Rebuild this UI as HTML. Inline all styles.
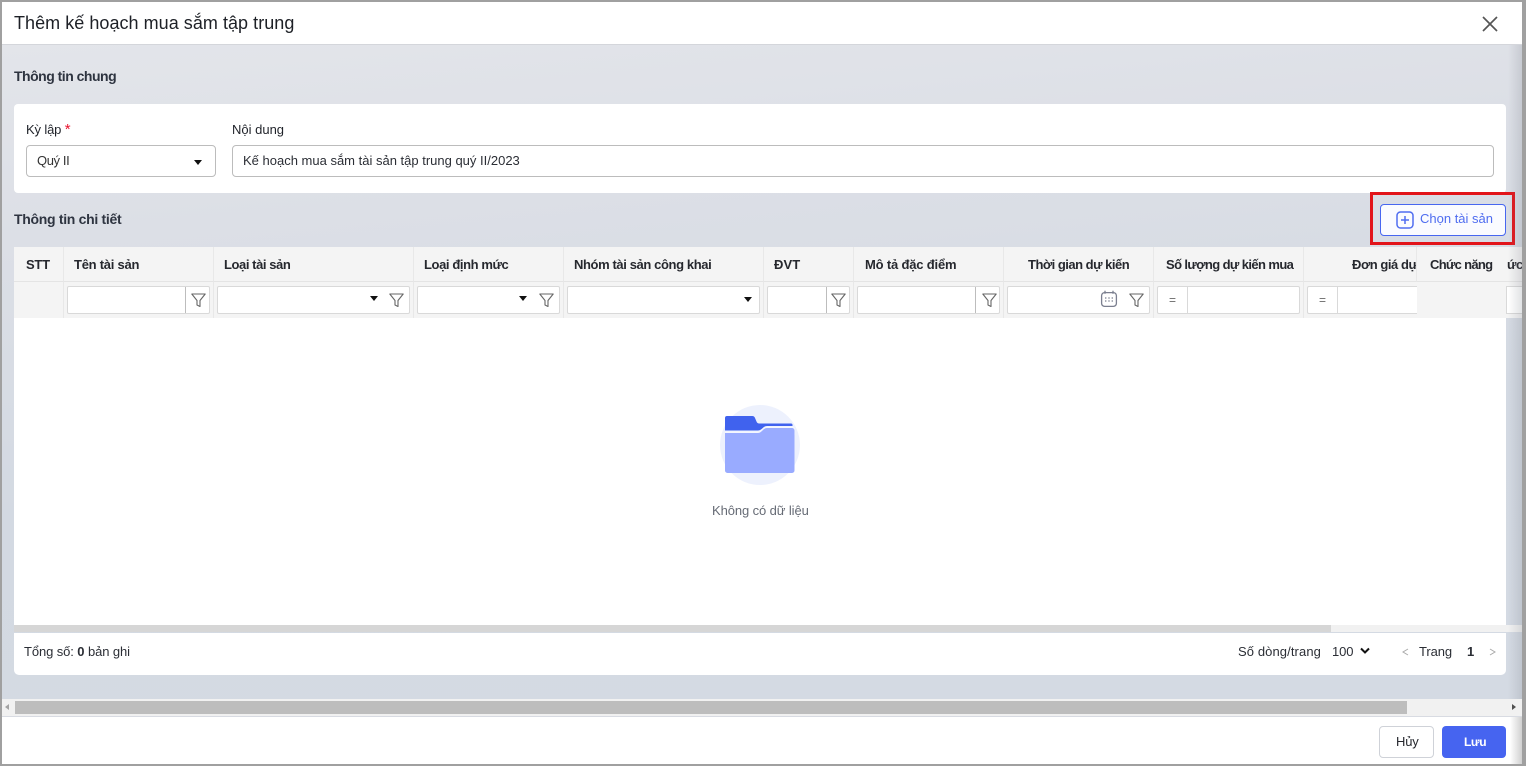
<!DOCTYPE html>
<html lang="vi"><head><meta charset="utf-8"><title>Thêm kế hoạch mua sắm tập trung</title>
<style>
*{box-sizing:border-box}
html,body{margin:0;padding:0;width:1526px;height:766px;overflow:hidden;background:#fff}
body{font-family:"Liberation Sans",sans-serif;color:#1f2229;font-size:13px;position:relative}
.a{position:absolute}
.t{position:absolute;white-space:nowrap;line-height:16px}
.b{font-weight:bold}
.bg{left:2px;top:45px;width:1520px;height:654px;background:linear-gradient(175deg,#e3e5ea 0%,#dcdfe6 25%,#d3d9e2 60%,#d4dae3 100%)}
.card{background:#fff}
.th{top:247px;height:35px;background:#f4f4f4;border-right:1px solid #e8e8e8;border-bottom:1px solid #e4e4e4}
.fr{top:282px;height:36px;background:#f4f4f4;border-right:1px solid #e8e8e8}
.in{top:286px;height:28px;background:#fff;border:1px solid #d9d9d9;border-radius:2px}
.sep{top:287px;width:1px;height:26px;background:#bdbdbd}
.sep2{top:287px;width:1px;height:26px;background:#d9d9d9}
.h{font-weight:bold;top:257px;font-size:13px;color:#26282e;letter-spacing:-.25px}
.car{width:0;height:0;border-left:4.5px solid transparent;border-right:4.5px solid transparent;border-top:5px solid #111}
svg{position:absolute;display:block}
</style></head><body>
<div class="a bg"></div>

<!-- header -->
<div class="a" style="left:2px;top:2px;width:1520px;height:43px;background:#fff;border-bottom:1px solid #d4d6db"></div>
<div class="t" style="left:14px;top:12px;font-size:18px;line-height:22px;color:#1d2026;letter-spacing:.04px">Thêm kế hoạch mua sắm tập trung</div>
<svg style="left:1481px;top:15px" width="18" height="18" viewBox="0 0 18 18"><path d="M2 2 16 16M16 2 2 16" stroke="#555" stroke-width="1.7" fill="none"/></svg>

<!-- general -->
<div class="t b" style="left:14px;top:68px;font-size:14px;color:#2e3440;letter-spacing:-.5px">Thông tin chung</div>
<div class="a card" style="left:14px;top:104px;width:1492px;height:89px;border-radius:4px"></div>
<div class="t" style="left:26px;top:122px;letter-spacing:-.15px">Kỳ lập <span style="color:#e8112d;font-size:15px">*</span></div>
<div class="t" style="left:232px;top:122px">Nội dung</div>
<div class="a" style="left:26px;top:145px;width:190px;height:32px;border:1px solid #bcbcbc;border-radius:4px;background:#fff"></div>
<div class="t" style="left:37px;top:153px;color:#333;letter-spacing:-.4px">Quý II</div>
<div class="a car" style="left:194px;top:160px"></div>
<div class="a" style="left:232px;top:145px;width:1262px;height:32px;border:1px solid #bcbcbc;border-radius:4px;background:#fff"></div>
<div class="t" style="left:243px;top:153px;color:#2b2e35">Kế hoạch mua sắm tài sản tập trung quý II/2023</div>

<!-- detail -->
<div class="t b" style="left:14px;top:211px;font-size:14px;color:#2e3440;letter-spacing:-.3px">Thông tin chi tiết</div>
<div class="a" style="left:1380px;top:204px;width:126px;height:32px;background:#fafbff;border:1px solid #4766f0;border-radius:4px"></div>
<svg style="left:1396px;top:211px" width="18" height="18" viewBox="0 0 18 18"><rect x="1" y="1" width="16" height="16" rx="3.5" fill="none" stroke="#4f6df0" stroke-width="1.5"/><path d="M9 5v8M5 9h8" stroke="#4f6df0" stroke-width="1.5" fill="none"/></svg>
<div class="t" style="left:1420px;top:211px;color:#4f6df0">Chọn tài sản</div>
<div class="a" style="left:1370px;top:192px;width:145px;height:53px;border:3px solid #e2141a"></div>

<!-- table -->
<div class="a card" style="left:14px;top:318px;width:1492px;height:307px"></div>
<div class="a th" style="left:14px;width:50px"></div>
<div class="a th" style="left:64px;width:150px"></div>
<div class="a th" style="left:214px;width:200px"></div>
<div class="a th" style="left:414px;width:150px"></div>
<div class="a th" style="left:564px;width:200px"></div>
<div class="a th" style="left:764px;width:90px"></div>
<div class="a th" style="left:854px;width:150px"></div>
<div class="a th" style="left:1004px;width:150px"></div>
<div class="a th" style="left:1154px;width:150px"></div>
<div class="a th" style="left:1304px;width:113px"></div>
<div class="a th" style="left:1417px;width:105px;border-right:0"></div>
<div class="a fr" style="left:14px;width:50px"></div>
<div class="a fr" style="left:64px;width:150px"></div>
<div class="a fr" style="left:214px;width:200px"></div>
<div class="a fr" style="left:414px;width:150px"></div>
<div class="a fr" style="left:564px;width:200px"></div>
<div class="a fr" style="left:764px;width:90px"></div>
<div class="a fr" style="left:854px;width:150px"></div>
<div class="a fr" style="left:1004px;width:150px"></div>
<div class="a fr" style="left:1154px;width:150px"></div>
<div class="a fr" style="left:1304px;width:113px;border-right:0"></div>
<div class="a fr" style="left:1417px;width:105px;border-right:0"></div>

<div class="t h" style="left:26px">STT</div>
<div class="t h" style="left:74px">Tên tài sản</div>
<div class="t h" style="left:224px;letter-spacing:-.43px">Loại tài sản</div>
<div class="t h" style="left:424px;letter-spacing:-.4px">Loại định mức</div>
<div class="t h" style="left:574px;letter-spacing:-.39px">Nhóm tài sản công khai</div>
<div class="t h" style="left:774px;letter-spacing:.1px">ĐVT</div>
<div class="t h" style="left:865px;letter-spacing:-.18px">Mô tả đặc điểm</div>
<div class="t h" style="left:1028px;letter-spacing:-.5px">Thời gian dự kiến</div>
<div class="t h" style="left:1166px;letter-spacing:-.6px">Số lượng dự kiến mua</div>
<div class="a" style="left:1304px;top:247px;width:112px;height:34px;overflow:hidden"><div class="t h" style="left:48px;top:10px;letter-spacing:-.45px">Đơn giá dự kiến</div></div>
<div class="t h" style="left:1430px;letter-spacing:-.7px">Chức năng</div>
<div class="a" style="left:1507px;top:257px;width:15px;height:16px;overflow:hidden"><div class="t h" style="left:0;top:0;letter-spacing:-.4px">ức</div></div>

<!-- filters -->
<div class="a in" style="left:67px;width:143px"></div><div class="a sep" style="left:185px"></div>
<div class="a in" style="left:217px;width:193px"></div>
<div class="a in" style="left:417px;width:143px"></div>
<div class="a in" style="left:567px;width:193px"></div>
<div class="a in" style="left:767px;width:83px"></div><div class="a sep" style="left:826px"></div>
<div class="a in" style="left:857px;width:143px"></div><div class="a sep" style="left:975px"></div>
<div class="a in" style="left:1007px;width:143px"></div>
<div class="a in" style="left:1157px;width:143px"></div><div class="a sep2" style="left:1187px"></div>
<div class="a" style="left:1307px;top:286px;width:110px;height:28px;background:#fff;border:1px solid #d9d9d9;border-right:0;border-radius:2px 0 0 2px"></div><div class="a sep2" style="left:1337px"></div>
<div class="a" style="left:1506px;top:286px;width:16px;height:28px;background:#fff;border:1px solid #d9d9d9;border-right:0"></div>
<div class="t" style="left:1169px;top:292px;font-size:12px;color:#666">=</div>
<div class="t" style="left:1319px;top:292px;font-size:12px;color:#666">=</div>

<div class="a car" style="left:370px;top:296px"></div>
<div class="a car" style="left:519px;top:296px"></div>
<div class="a car" style="left:744px;top:297px"></div>

<svg style="left:191px;top:293px" width="15" height="15" viewBox="0 0 15 15"><path d="M.8 1h13.4L9 7.5v6L6 12V7.5z" fill="none" stroke="#666" stroke-width="1.1" stroke-linejoin="round"/></svg>
<svg style="left:389px;top:293px" width="15" height="15" viewBox="0 0 15 15"><path d="M.8 1h13.4L9 7.5v6L6 12V7.5z" fill="none" stroke="#666" stroke-width="1.1" stroke-linejoin="round"/></svg>
<svg style="left:539px;top:293px" width="15" height="15" viewBox="0 0 15 15"><path d="M.8 1h13.4L9 7.5v6L6 12V7.5z" fill="none" stroke="#666" stroke-width="1.1" stroke-linejoin="round"/></svg>
<svg style="left:831px;top:293px" width="15" height="15" viewBox="0 0 15 15"><path d="M.8 1h13.4L9 7.5v6L6 12V7.5z" fill="none" stroke="#666" stroke-width="1.1" stroke-linejoin="round"/></svg>
<svg style="left:982px;top:293px" width="15" height="15" viewBox="0 0 15 15"><path d="M.8 1h13.4L9 7.5v6L6 12V7.5z" fill="none" stroke="#666" stroke-width="1.1" stroke-linejoin="round"/></svg>
<svg style="left:1129px;top:293px" width="15" height="15" viewBox="0 0 15 15"><path d="M.8 1h13.4L9 7.5v6L6 12V7.5z" fill="none" stroke="#666" stroke-width="1.1" stroke-linejoin="round"/></svg>
<svg style="left:1100px;top:290px" width="18" height="18" viewBox="0 0 18 18"><rect x="1.6" y="2.6" width="14.8" height="13.8" rx="3" fill="none" stroke="#7b7f8f" stroke-width="1.3"/><path d="M5 .8v3M13 .8v3" stroke="#7b7f8f" stroke-width="1.3"/><path d="M5 8h1.400M8.300 8h1.400M11.600 8H13M5 11h1.400M8.300 11h1.400M11.600 11H13" stroke="#7b7f8f" stroke-width="1.2"/></svg>

<!-- empty -->
<div class="a" style="left:720px;top:405px;width:80px;height:80px;border-radius:50%;background:#edf1fd"></div>
<svg style="left:725px;top:415px" width="70" height="59" viewBox="0 0 70 59"><path d="M0 3a2 2 0 0 1 2-2h25a3 3 0 0 1 3 2l1.500 3.500a3 3 0 0 0 3 2H66a1.500 1.500 0 0 1 1.500 1.500v1H42c-4 0-5 4.500-9 4.500H0z" fill="#4062ee"/><path d="M0 16.500h33c4 0 5-5 9-5h25a3 3 0 0 1 3 3V20H0z" fill="#f4f6fe"/><path d="M0 18h33c4 0 5-5 9-5h25a2.500 2.500 0 0 1 2.500 2.500v40a2.500 2.500 0 0 1-2.500 2.500H2.500A2.500 2.500 0 0 1 0 55.500z" fill="#99abff"/></svg>
<div class="t" style="left:712px;top:503px;color:#666b75;letter-spacing:-.1px">Không có dữ liệu</div>

<!-- table scrollbar + footer -->
<div class="a" style="left:14px;top:625px;width:1508px;height:7px;background:#f1f1f1"></div>
<div class="a" style="left:14px;top:625px;width:1317px;height:7px;background:#d6d6d6"></div>
<div class="a card" style="left:14px;top:633px;width:1492px;height:42px;border-radius:0 0 5px 5px"></div>
<div class="t" style="left:24px;top:644px;color:#2b2e35;letter-spacing:-.1px">Tổng số: <b>0</b> bản ghi</div>
<div class="t" style="left:1238px;top:644px;color:#2b2e35;letter-spacing:.1px">Số dòng/trang</div>
<div class="t" style="left:1332px;top:644px;color:#2b2e35;letter-spacing:-.1px">100</div>
<svg style="left:1360px;top:647px" width="10" height="8" viewBox="0 0 10 8"><path d="M1 1.500 5 5.500 9 1.500" fill="none" stroke="#111" stroke-width="2"/></svg>
<svg style="left:1402px;top:648px" width="7" height="8" viewBox="0 0 7 8"><path d="M6 1 1 4l5 3" fill="none" stroke="#aaa" stroke-width="1"/></svg>
<div class="t" style="left:1419px;top:644px;color:#2b2e35;letter-spacing:-.1px">Trang</div>
<div class="t b" style="left:1467px;top:644px;color:#2b2e35">1</div>
<svg style="left:1489px;top:648px" width="7" height="8" viewBox="0 0 7 8"><path d="M1 1l5 3-5 3" fill="none" stroke="#aaa" stroke-width="1"/></svg>

<!-- side shadow -->
<div class="a" style="left:1508px;top:45px;width:14px;height:654px;background:linear-gradient(90deg,rgba(120,125,135,0),rgba(120,125,135,.22))"></div>

<!-- page scrollbar -->
<div class="a" style="left:2px;top:699px;width:1520px;height:17px;background:#f1f1f1"></div>
<div class="a" style="left:15px;top:701px;width:1392px;height:13px;background:#bdbdbd"></div>
<div class="a" style="left:5px;top:704px;width:0;height:0;border-top:3.500px solid transparent;border-bottom:3.500px solid transparent;border-right:4px solid #a3a3a3"></div>
<div class="a" style="left:1512px;top:704px;width:0;height:0;border-top:3.500px solid transparent;border-bottom:3.500px solid transparent;border-left:4px solid #505050"></div>

<!-- footer -->
<div class="a" style="left:2px;top:716px;width:1520px;height:48px;background:#fff;border-top:1px solid #d8dbe2"></div>
<div class="a" style="left:1510px;top:717px;width:12px;height:47px;background:linear-gradient(90deg,rgba(120,120,120,0),rgba(120,120,120,.35))"></div>
<div class="a" style="left:1379px;top:726px;width:55px;height:32px;background:#fff;border:1px solid #cfd2d8;border-radius:4px"></div>
<div class="t" style="left:1396px;top:734px;color:#26282e;letter-spacing:-.2px">Hủy</div>
<div class="a" style="left:1442px;top:726px;width:64px;height:32px;background:#4664f0;border-radius:4px"></div>
<div class="t b" style="left:1464px;top:734px;color:#fff;font-size:12px;letter-spacing:-.4px">Lưu</div>

<!-- window frame -->
<div class="a" style="left:0;top:0;width:1526px;height:2px;background:#a0a0a0"></div>
<div class="a" style="left:0;top:0;width:2px;height:766px;background:#a0a0a0"></div>
<div class="a" style="left:1522px;top:0;width:4px;height:766px;background:#a0a0a0"></div>
<div class="a" style="left:0;top:764px;width:1526px;height:2px;background:#a0a0a0"></div>
</body></html>
